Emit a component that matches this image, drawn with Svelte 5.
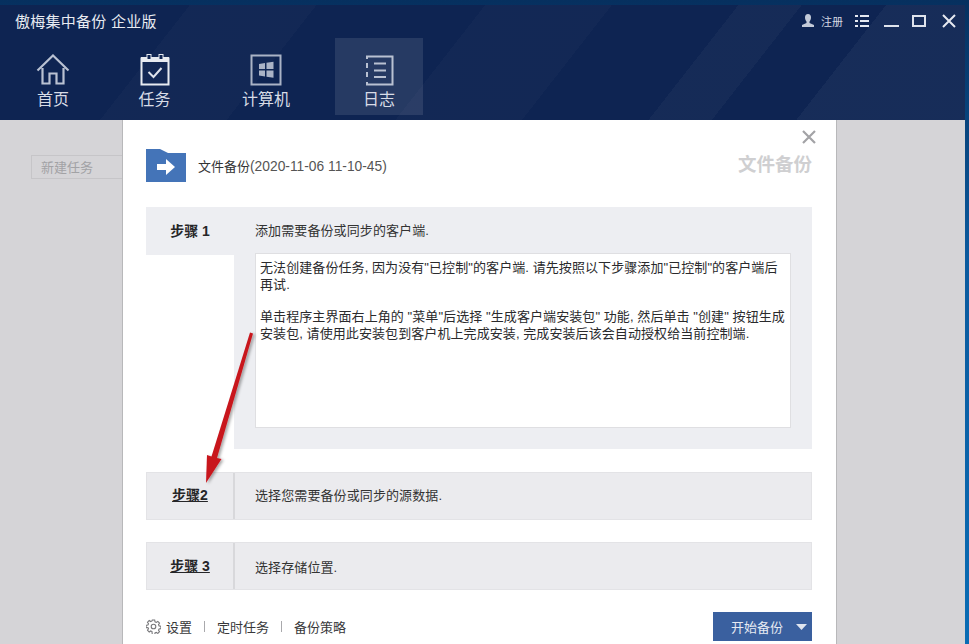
<script lang="ts">
	const navItems = [
		{ key: 'home', label: '首页', active: false },
		{ key: 'task', label: '任务', active: false },
		{ key: 'computer', label: '计算机', active: false },
		{ key: 'log', label: '日志', active: true }
	];
</script>

<div class="desktop">
	<div class="window">
		<header class="head">
			<div class="streaks"></div>
			<div class="titlebar">
				<span class="app-title">傲梅集中备份 企业版</span>
				<div class="win-tools">
					<svg class="user" width="12" height="13" viewBox="0 0 12 13">
						<path d="M6 0c2 0 3 1.500 3 3.500S8 7 7.500 7.500V9L12 11v2H0v-2l4.500-2V7.500C4 7 3 5.500 3 3.500S4 0 6 0z" fill="#c3cad8" />
					</svg>
					<span class="reg">注册</span>
					<svg width="14" height="12" viewBox="0 0 14 12" fill="#e4e8f0">
						<rect x="0" y="0" width="3" height="2" /><rect x="5" y="0" width="9" height="2" />
						<rect x="0" y="5" width="3" height="2" /><rect x="5" y="5" width="9" height="2" />
						<rect x="0" y="10" width="3" height="2" /><rect x="5" y="10" width="9" height="2" />
					</svg>
					<svg class="min" width="15" height="14" viewBox="0 0 15 14"><rect x="0" y="11" width="15" height="2" fill="#dfe3ec" /></svg>
					<svg class="max" width="14" height="12" viewBox="0 0 14 12"><rect x="1" y="1" width="12" height="10" fill="none" stroke="#dfe3ec" stroke-width="2" /></svg>
					<svg class="close" width="14" height="14" viewBox="0 0 14 14"><path d="M1 1l12 12M13 1L1 13" stroke="#e6e9f0" stroke-width="2" /></svg>
				</div>
			</div>
			<nav class="nav">
				{#each navItems as item (item.key)}
					<div class="nav-item nav-item--{item.key}" class:nav-item--active={item.active}>
						{#if item.key === 'home'}
							<svg width="34" height="32" viewBox="0 0 34 32" fill="none" stroke="#b9c1d2" stroke-width="2.200">
								<path d="M1.500 16.500L17 1.500l15.500 15M6.500 14v15.500h7V19.500h7v10h7V14" />
							</svg>
						{:else if item.key === 'task'}
							<svg width="30" height="32" viewBox="0 0 30 32" fill="none">
								<path d="M1.500 4.500h27v26h-27z" stroke="#e8ebf1" stroke-width="2" />
								<rect x="1" y="3" width="28" height="5" fill="#e8ebf1" />
								<rect x="7" y="0.500" width="4" height="5" fill="#0e2452" stroke="#e8ebf1" />
								<rect x="19" y="0.500" width="4" height="5" fill="#0e2452" stroke="#e8ebf1" />
								<path d="M8.500 18l5 5 8-9" stroke="#dfe3ec" stroke-width="2" />
							</svg>
						{:else if item.key === 'computer'}
							<svg width="32" height="32" viewBox="0 0 32 32" fill="none">
								<rect x="1.500" y="1.500" width="29" height="29" stroke="#aab3c6" stroke-width="2" />
								<path d="M9 10l6-1v6H9zM16.500 8.700l7-1V15h-7zM9 16.500h6v6l-6-1zM16.500 16.500h7v7.300l-7-1z" fill="#aab3c6" />
							</svg>
						{:else}
							<svg width="30" height="32" viewBox="0 0 30 32" fill="none" stroke="#b9c1d2" stroke-width="2">
								<path d="M3 5V2.500h25.500v28H3V28M3 9v5M3 18v5" />
								<path d="M10 9.500h12M10 16.500h12M10 23h12" />
							</svg>
						{/if}
						<span>{item.label}</span>
					</div>
				{/each}
			</nav>
		</header>

		<div class="body">
			<div class="side">
				<div class="new-task">新建任务</div>
			</div>

			<section class="dialog">
				<svg class="dialog-close" width="14" height="14" viewBox="0 0 14 14"><path d="M1 1l12 12M13 1L1 13" stroke="#a3a3a6" stroke-width="2.200" /></svg>

				<div class="dialog-head">
					<svg width="40" height="34" viewBox="0 0 40 34">
						<path d="M0 0h14l8 4h18v29H0z" fill="#4474b8" />
						<path d="M11 15h9v-5l9 8-9 8v-5h-9z" fill="#fff" />
					</svg>
					<span class="dialog-name">文件备份<span class="dialog-date">(2020-11-06 11-10-45)</span></span>
					<span class="dialog-kind">文件备份</span>
				</div>

				<div class="step-open">
					<div class="step-open-head">
						<div class="step-label">步骤 1</div>
						<div class="step-desc">添加需要备份或同步的客户端.</div>
					</div>
					<div class="step-open-body">
						<div class="message">
							<p>无法创建备份任务, 因为没有"已控制"的客户端. 请先按照以下步骤添加"已控制"的客户端后再试.</p>
							<p>单击程序主界面右上角的 "菜单"后选择 "生成客户端安装包" 功能, 然后单击 "创建" 按钮生成安装包, 请使用此安装包到客户机上完成安装, 完成安装后该会自动授权给当前控制端.</p>
						</div>
					</div>
				</div>

				<div class="step">
					<div class="step-label step-label--link">步骤2</div>
					<div class="step-desc">选择您需要备份或同步的源数据.</div>
				</div>

				<div class="step step--last">
					<div class="step-label step-label--link">步骤 3</div>
					<div class="step-desc">选择存储位置.</div>
				</div>

				<footer class="foot">
					<svg width="15" height="15" viewBox="0 0 15 15" fill="none" stroke="#77777a" stroke-width="1.100">
						<circle cx="7.500" cy="7.500" r="2.300" />
						<path d="M6.300 1h2.400l.3 1.800 1.300.6 1.500-1 1.700 1.700-1 1.500.6 1.300 1.800.3v2.400l-1.800.3-.6 1.300 1 1.500-1.700 1.700-1.500-1-1.300.6-.3 1.800H6.300L6 12.600l-1.300-.6-1.500 1-1.700-1.700 1-1.500-.6-1.300L.1 8.700V6.300l1.800-.3.6-1.300-1-1.500 1.700-1.700 1.500 1L6 1.900z" />
					</svg>
					<span class="foot-link foot-link--first">设置</span>
					<i class="sep"></i>
					<span class="foot-link">定时任务</span>
					<i class="sep"></i>
					<span class="foot-link">备份策略</span>
					<button type="button" class="start">
						<span>开始备份</span>
						<svg width="11" height="6" viewBox="0 0 11 6"><path d="M0 0h11L5.500 6z" fill="#dfe5f0" /></svg>
					</button>
				</footer>
			</section>

			<div class="side side--right"></div>
		</div>
	</div>

	<svg class="arrow" width="70" height="170" viewBox="0 0 70 170">
		<defs>
			<filter id="arrow-shadow" x="-30%" y="-10%" width="160%" height="120%">
				<feDropShadow dx="2" dy="1" stdDeviation="1.500" flood-color="#000" flood-opacity="0.35" />
			</filter>
		</defs>
		<g filter="url(#arrow-shadow)">
			<path d="M50 1.500L53 2.500 17 127l4.500 1L6 152l1-28 4.500 1.500z" fill="#c8161e" />
		</g>
	</svg>
</div>

<style>
	:global(body) {
		margin: 0;
		overflow: hidden;
	}

	.desktop {
		position: relative;
		width: 969px;
		height: 644px;
		overflow: hidden;
		padding: 5px 4px 0 0;
		box-sizing: border-box;
		background: linear-gradient(180deg, #06305f 0%, #0b5a9e 40%, #0a6cb4 100%);
		font-family: 'Liberation Sans', 'Noto Sans CJK SC', sans-serif;
		color: #2c2c2e;
	}

	.window {
		display: flex;
		flex-direction: column;
		height: 100%;
	}

	.head {
		position: relative;
		flex: none;
		height: 115px;
		box-sizing: border-box;
		background: #0e2452;
		color: #e8ebf1;
		overflow: hidden;
	}

	.streaks {
		position: absolute;
		inset: 0;
		background:
			linear-gradient(128deg, transparent 0 18%, rgba(255, 255, 255, 0.02) 18% 30%, transparent 30% 46%, rgba(255, 255, 255, 0.02) 46% 58%, transparent 58% 70%, rgba(255, 255, 255, 0.03) 70% 76%, transparent 76% 84%, rgba(255, 255, 255, 0.04) 84% 100%);
	}

	.titlebar {
		position: relative;
		display: flex;
		align-items: center;
		justify-content: space-between;
		height: 33px;
		padding: 0 9px 2px 15px;
		box-sizing: border-box;
	}

	.app-title {
		font-size: 15px;
		letter-spacing: 0.25px;
	}

	.win-tools {
		display: flex;
		align-items: center;
	}

	.reg {
		font-size: 11px;
		margin-left: 7px;
		margin-right: 12px;
		color: #d5d9e3;
	}

	.min {
		margin-left: 15px;
	}

	.max {
		margin-left: 13px;
	}

	.close {
		margin-left: 16px;
	}

	.nav {
		position: relative;
		display: flex;
		padding-left: 9px;
	}

	.nav-item {
		display: flex;
		flex-direction: column;
		align-items: center;
		box-sizing: border-box;
		height: 77px;
		padding-top: 16px;
		font-size: 16px;
		line-height: 20px;
		color: #d8dce6;
	}

	.nav-item svg {
		flex: none;
		margin-bottom: 4px;
	}

	.nav-item--home {
		width: 88px;
	}

	.nav-item--task {
		width: 115px;
	}

	.nav-item--computer {
		width: 108px;
	}

	.nav-item--log {
		width: 88px;
		margin-left: 15px;
	}

	.nav-item--active {
		background: rgba(255, 255, 255, 0.1);
	}

	.body {
		flex: 1;
		display: flex;
		min-height: 0;
		background: #d5d4d7;
	}

	.side {
		flex: none;
		width: 122px;
	}

	.side--right {
		width: 128px;
	}

	.new-task {
		box-sizing: border-box;
		width: 91px;
		height: 24px;
		margin: 35px 0 0 31px;
		padding-left: 9px;
		border: 1px solid #c6c5c8;
		border-right: 0;
		font-size: 13px;
		line-height: 24px;
		color: #a2a2a5;
	}

	.dialog {
		position: relative;
		flex: none;
		box-sizing: border-box;
		width: 715px;
		padding: 0 24px 0 23px;
		background: #fff;
		border-left: 1px solid #b8b8ba;
		border-right: 1px solid #b8b8ba;
	}

	.dialog-close {
		position: absolute;
		top: 10px;
		right: 20px;
	}

	.dialog-head {
		display: flex;
		align-items: center;
		height: 87px;
		padding-top: 4px;
		box-sizing: border-box;
	}

	.dialog-name {
		margin-left: 12px;
		font-size: 13px;
		color: #333;
	}

	.dialog-date {
		font-size: 13.800px;
		color: #555;
	}

	.dialog-kind {
		margin-left: auto;
		padding-bottom: 6px;
		font-size: 18.500px;
		font-weight: 700;
		color: #cfcfd1;
	}

	.step-open {
		height: 242px;
	}

	.step-open-head {
		display: flex;
		height: 48px;
		background: #edeef2;
	}

	.step-label {
		flex: none;
		box-sizing: border-box;
		width: 88px;
		text-align: center;
		font-size: 14px;
		font-weight: 700;
		line-height: 48px;
		color: #262628;
	}

	.step-label--link {
		text-decoration: underline;
	}

	.step-desc {
		padding-left: 21px;
		font-size: 13px;
		letter-spacing: 0.1px;
		line-height: 48px;
		color: #333;
	}

	.step-open-body {
		box-sizing: border-box;
		height: 194px;
		margin-left: 88px;
		padding: 0 21px 21px;
		background: #edeef2;
	}

	.message {
		position: relative;
		top: -2px;
		box-sizing: border-box;
		height: 175px;
		padding: 5px 4px 0;
		background: #fff;
		border: 1px solid #dfdfe2;
		font-size: 13px;
		letter-spacing: 0.08px;
		line-height: 17px;
		color: #2a2a2c;
	}

	.message p {
		margin: 0 0 15px;
	}

	.step {
		display: flex;
		box-sizing: border-box;
		height: 48px;
		margin-top: 23px;
		background: #ebebee;
		border: 1px solid #e3e3e6;
	}

	.step .step-label {
		width: 88px;
		border-right: 2px solid #d8d8db;
		line-height: 45px;
	}

	.step .step-desc {
		padding-left: 20px;
		line-height: 45px;
	}

	.step--last {
		margin-top: 22px;
	}

	.step--last .step-label {
		line-height: 47px;
	}

	.step--last .step-desc {
		line-height: 50px;
	}

	.foot {
		display: flex;
		align-items: center;
		height: 29px;
		margin-top: 22px;
		font-size: 13px;
		color: #38383a;
	}

	.foot-link--first {
		margin-left: 5px;
	}

	.sep {
		width: 1px;
		height: 11px;
		margin: 0 12px;
		background: #a9a9ac;
	}

	.start {
		display: flex;
		align-items: center;
		justify-content: space-between;
		box-sizing: border-box;
		width: 99px;
		height: 29px;
		margin-left: auto;
		padding: 0 5px 0 18px;
		background: #3a609f;
		border: 0;
		font: inherit;
		font-size: 13px;
		color: #e6eaf2;
	}

	.arrow {
		position: absolute;
		left: 200px;
		top: 331px;
	}
</style>
